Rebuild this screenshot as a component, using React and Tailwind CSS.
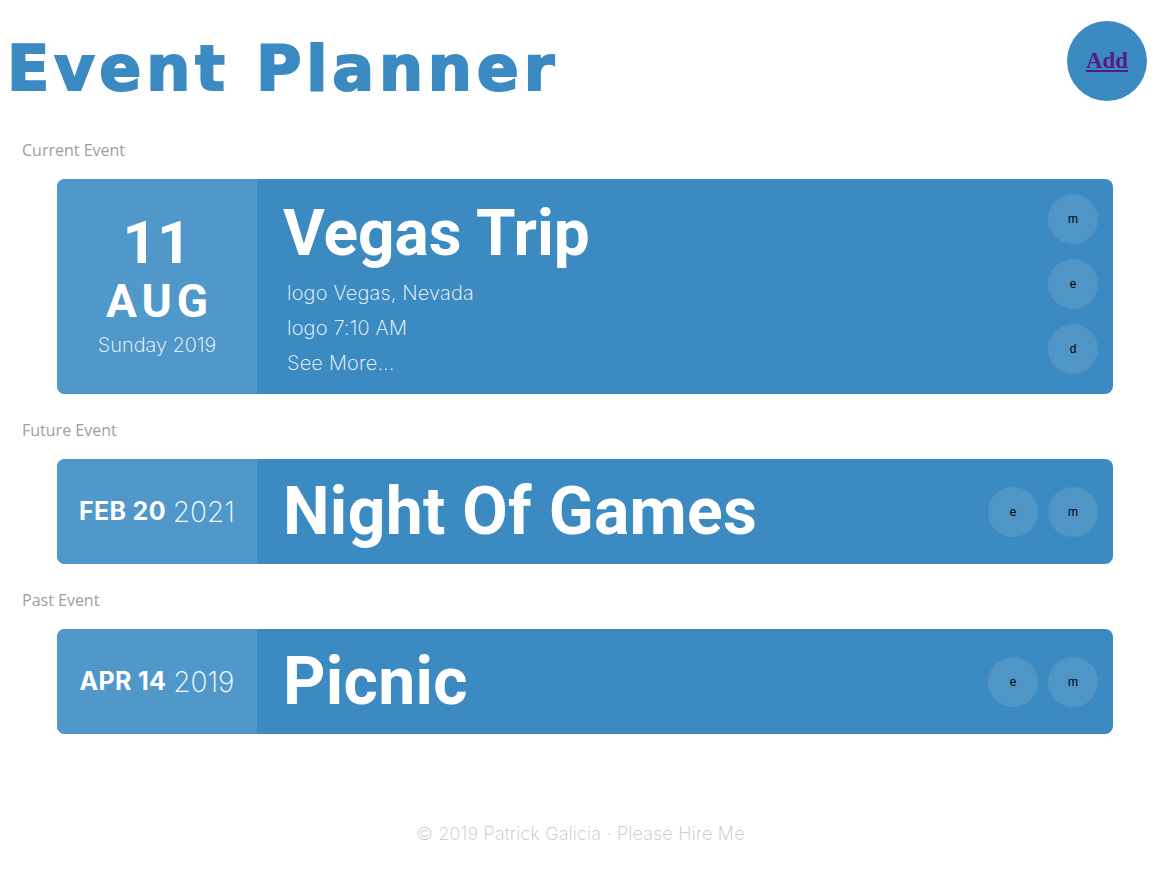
import React from "react";

const Btn = ({ children }) => (
  <div className="w-[50px] h-[50px] rounded-full bg-white/10 flex items-center justify-center text-[12px] text-black font-['Liberation_Sans',Arial,sans-serif]">
    {children}
  </div>
);

function Label({ children, first }) {
  return (
    <div className={`ml-[22px] ${first ? "mt-[37px]" : "mt-[24px]"} text-[16px] leading-[24px] text-[#a39c9c] font-['Open_Sans',sans-serif]`}>
      {children}
    </div>
  );
}

function SmallCard({ mon, day, year, title }) {
  return (
    <div className="ml-[57px] mr-[48px] mt-[17px] flex h-[105px] rounded-[8px] overflow-hidden bg-[#3b8ac1]">
      <div className="w-[200px] shrink-0 bg-[#5098c9] flex items-center justify-center text-white">
        <span className="text-[25px] font-bold font-['Inter',sans-serif] tracking-[0.3px]">{mon} {day}</span>
        <span className="text-[28px] font-extralight ml-[7px] font-['Inter',sans-serif]">{year}</span>
      </div>
      <div className="flex-1 flex items-center pl-[26px] text-white">
        <span className="text-[66px] font-bold leading-none font-['Roboto',sans-serif] tracking-[0.3px]">{title}</span>
      </div>
      <div className="flex items-center gap-[10px] pr-[15px]">
        <Btn>e</Btn>
        <Btn>m</Btn>
      </div>
    </div>
  );
}

export default function App() {
  return (
    <div className="w-[1161px] min-h-[871px] bg-white">
      <div className="flex items-start justify-between">
        <h1 className="text-[#3b8ac1] text-[62px] font-bold leading-none ml-[7px] mt-[38px] tracking-[4.8px] font-['DejaVu_Sans',sans-serif] [-webkit-text-stroke:2px_#3b8ac1]">
          Event Planner
        </h1>
        <div className="mt-[21px] mr-[14px] w-[80px] h-[80px] rounded-full bg-[#3b8ac1] flex items-center justify-center">
          <a href="#" className="text-[#551a8b] underline font-bold text-[23px] font-['Liberation_Serif',serif]">Add</a>
        </div>
      </div>

      <Label first>Current Event</Label>
      <div className="ml-[57px] mr-[48px] mt-[17px] flex h-[215px] rounded-[8px] overflow-hidden bg-[#3b8ac1]">
        <div className="w-[200px] shrink-0 bg-[#5098c9] flex flex-col items-center text-white pt-[34px]">
          <div className="text-[60px] font-bold leading-none font-['Roboto',sans-serif]">11</div>
          <div className="text-[46px] font-bold leading-none tracking-[5px] ml-[5px] mt-[5px] font-['Roboto',sans-serif]">AUG</div>
          <div className="text-[20px] font-extralight mt-[6px] font-['Inter',sans-serif]">Sunday 2019</div>
        </div>
        <div className="flex-1 flex flex-col pl-[26px] pt-[23px] text-white">
          <div className="text-[64px] font-bold leading-none font-['Roboto',sans-serif]">Vegas Trip</div>
          <div className="mt-[10px] ml-[4px] text-[20px] font-extralight leading-[35px] font-['Inter',sans-serif] tracking-[0.2px]">
            <div>logo Vegas, Nevada</div>
            <div>logo 7:10 AM</div>
            <div>See More...</div>
          </div>
        </div>
        <div className="flex flex-col gap-[15px] pr-[15px] pt-[15px]">
          <Btn>m</Btn>
          <Btn>e</Btn>
          <Btn>d</Btn>
        </div>
      </div>

      <Label>Future Event</Label>
      <SmallCard mon="FEB" day="20" year="2021" title="Night Of Games" />

      <Label>Past Event</Label>
      <SmallCard mon="APR" day="14" year="2019" title="Picnic" />

      <div className="mt-[86px] text-center text-[18px] font-extralight text-[#cfc0c0] font-['Inter',sans-serif] tracking-[0.2px]">
        © 2019 Patrick Galicia · Please Hire Me
      </div>
    </div>
  );
}
